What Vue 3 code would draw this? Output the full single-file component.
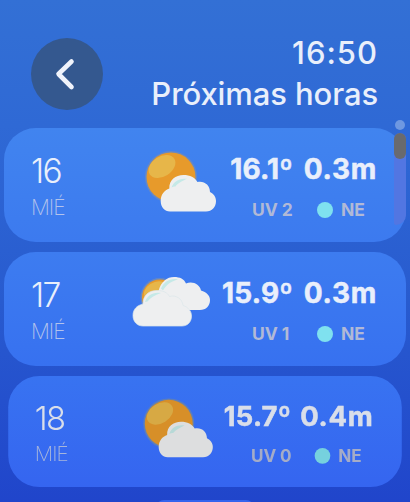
<script setup>
const hours = [
  { hour: '16', day: 'MIÉ', icon: 'sun', temp: '16.1º', wave: '0.3m', uv: 'UV 2', wind: 'NE' },
  { hour: '17', day: 'MIÉ', icon: 'clouds', temp: '15.9º', wave: '0.3m', uv: 'UV 1', wind: 'NE' },
  { hour: '18', day: 'MIÉ', icon: 'sun', temp: '15.7º', wave: '0.4m', uv: 'UV 0', wind: 'NE' },
]
</script>

<template>
  <div class="screen">
    <header class="header">
      <button class="back" aria-label="Volver">
        <svg width="72" height="72" viewBox="0 0 72 72">
          <path d="M40.5 23.5 L27.5 36 L40.5 49" />
        </svg>
      </button>
      <div class="heading">
        <div class="time">16:50</div>
        <div class="title">Próximas horas</div>
      </div>
    </header>

    <main class="list">
      <section v-for="h in hours" :key="h.hour" class="card">
        <div class="when">
          <div class="hour">{{ h.hour }}</div>
          <div class="day">{{ h.day }}</div>
        </div>

        <svg v-if="h.icon === 'sun'" class="icon" width="100" height="90" viewBox="-1 0 100 90">
          <circle class="halo" cx="41" cy="37" r="26" />
          <circle class="sun" cx="41" cy="37" r="24.5" />
          <ellipse class="shine" cx="32" cy="26.5" rx="14.5" ry="10" transform="rotate(-32 32 26.5)" />
          <path class="cloud" d="M40 71.5 C34.500 71.500 30.700 67 30.700 61 C30.700 54.500 34.500 50 39.300 48.500 C39 40 45.500 35 53.500 35 C60 35 65 37.500 67.500 42 C74 40.500 80 45 80 52 C83.500 53.500 86 57 86 61 C86 67 82 71.500 76 71.500 Z" />
          <path class="glint" d="M41.500 47.500 C43.500 41.500 49 37.800 57 38.800 C52.500 41 47.500 43.500 45.500 46.500 C44 46.300 43 46.700 41.500 47.500 Z" />
        </svg>
        <svg v-else class="icon" width="100" height="90" viewBox="4 8 100 90">
          <circle class="halo" cx="35" cy="41.500" r="19.500" />
          <circle class="sun" cx="35" cy="41.500" r="18" />
          <ellipse class="shine" cx="30" cy="34.500" rx="12" ry="8" transform="rotate(-32 30 34.500)" />
          <path class="cloud" d="M39 54 L33.500 35 C36 25.500 42 21 49 21 C55 21 59 23 61 27.500 C67 24.500 75 28 76 34.500 C81.500 36 85 39.500 85 44 C85 50 81 54 75 54 Z" />
          <path class="glint" d="M36 32.500 C39 25.500 45 21.800 53 23.300 C46 25.500 41 29 38 34.500 Z" />
          <path class="cloud front" d="M18 70 C12 70 8 65.500 8 59.500 C8 53 12 49.500 18 48 C18 39 24 34.500 32 34.500 C38 34.500 42.500 36.500 44.500 40.500 C51 38.500 57.500 43 58 49.500 C63 51 66.500 55 66.500 60 C66.500 66 62.500 70 57 70 Z" />
          <path class="glint" d="M20 46 C22 39.500 28 35.500 36 37 C29.500 39 25 42 22.500 45.500 Z" />
        </svg>

        <div class="data">
          <div class="temp">{{ h.temp }}</div>
          <div class="wave">{{ h.wave }}</div>
          <div class="uv">{{ h.uv }}</div>
          <div class="wind"><span class="dot"></span>{{ h.wind }}</div>
        </div>
      </section>
      <section class="card next"></section>
    </main>

    <div class="scroll">
      <span class="page-dot"></span>
      <div class="track"><div class="thumb"></div></div>
    </div>
  </div>
</template>

<style>
body { margin: 0; overflow: hidden; }
</style>

<style scoped>
.screen {
  position: relative;
  box-sizing: border-box;
  width: 410px;
  height: 502px;
  overflow: hidden;
  background: linear-gradient(#3370d5 0%, #2f69d5 25%, #285bcf 60%, #2045cb 100%);
  font-family: Inter, 'Liberation Sans', sans-serif;
  color: #e9effb;
}

/* header */
.header {
  box-sizing: border-box;
  height: 128px;
  padding: 32px 32px 0 31px;
  display: flex;
  justify-content: space-between;
}

.back {
  width: 72px;
  height: 72px;
  margin-top: 6px;
  padding: 0;
  border: 0;
  border-radius: 50%;
  background: #34588f;
}
.back svg { display: block; }
.back path {
  fill: none;
  stroke: #f0f3fb;
  stroke-width: 4.6;
  stroke-linecap: round;
  stroke-linejoin: round;
}

.heading {
  text-align: right;
  font-size: 31px;
  font-weight: 500;
  line-height: 41px;
  white-space: nowrap;
}
.time { letter-spacing: 1px; }
.title { letter-spacing: -0.1px; }

/* cards */
.list {
  padding: 0 4px;
  display: flex;
  flex-direction: column;
  gap: 10px;
}

.card {
  box-sizing: border-box;
  height: 114px;
  flex: none;
  padding-left: 28px;
  display: flex;
  border-radius: 32px;
  background: linear-gradient(#4184ef, #3c7aef);
}
.card:nth-child(2) { background: linear-gradient(#3d7cf0, #3771f0); }
.card:nth-child(3) {
  background: linear-gradient(#3873f1, #3565f0);
  transform: scale(0.979, 0.974);
  transform-origin: top center;
}
.card:nth-child(3) > * { filter: brightness(0.93); }
.card:nth-child(3) .icon { margin-left: -3px; margin-right: 3px; }
.card.next {
  width: 98px;
  height: 20px;
  margin: 0 auto;
  padding: 0;
  border-radius: 8px 8px 0 0;
  background: #3464ee;
}

.when { width: 97px; padding-top: 25px; }
.hour {
  margin-left: -1px;
  font-size: 33.5px;
  font-weight: 300;
  line-height: 37px;
  letter-spacing: -1.6px;
}
.day {
  margin-left: -1px;
  font-size: 21px;
  font-weight: 250;
  line-height: 36px;
  letter-spacing: -1px;
  color: #b3c3ec;
}

.icon { flex: none; margin-top: 12px; }
.halo { fill: #6688c5; }
.sun { fill: #e79a2b; }
.shine { fill: #e7b649; }
.cloud { fill: #eeeff0; }
.front { stroke: #dbe7ea; stroke-width: 0.7; }
.glint { fill: #c5e9e7; }

.data {
  width: 149px;
  padding-top: 21px;
  display: grid;
  grid-template-columns: 64px 85px;
  grid-template-rows: 41px 40px;
  align-content: start;
  white-space: nowrap;
}
.temp,
.wave {
  justify-self: end;
  font-size: 28px;
  font-weight: 700;
  line-height: 41px;
  letter-spacing: 0.2px;
  -webkit-text-stroke: 0.5px #e9effb;
}
.wave { margin-right: 1px; letter-spacing: 0.7px; }
.uv,
.wind {
  font-size: 17.5px;
  font-weight: 700;
  line-height: 40px;
  color: #b1b9d6;
}
.uv { padding-left: 23px; letter-spacing: -0.1px; }
.wind {
  padding-left: 24px;
  display: flex;
  align-items: center;
}
.dot {
  width: 16px;
  height: 16px;
  margin-right: 8px;
  border-radius: 50%;
  background: #7fe1ef;
}

/* scroll indicator */
.scroll {
  position: absolute;
  top: 120px;
  right: 4px;
  width: 12px;
}
.page-dot {
  display: block;
  width: 10px;
  height: 10px;
  margin: 0 1px 3px;
  border-radius: 50%;
  background: #6e98e1;
}
.track {
  height: 92px;
  border-radius: 6px 6px 10px 2px;
  background: #5276e2;
}
.thumb {
  height: 26px;
  border-radius: 6px;
  background: #696a6e;
}
</style>
